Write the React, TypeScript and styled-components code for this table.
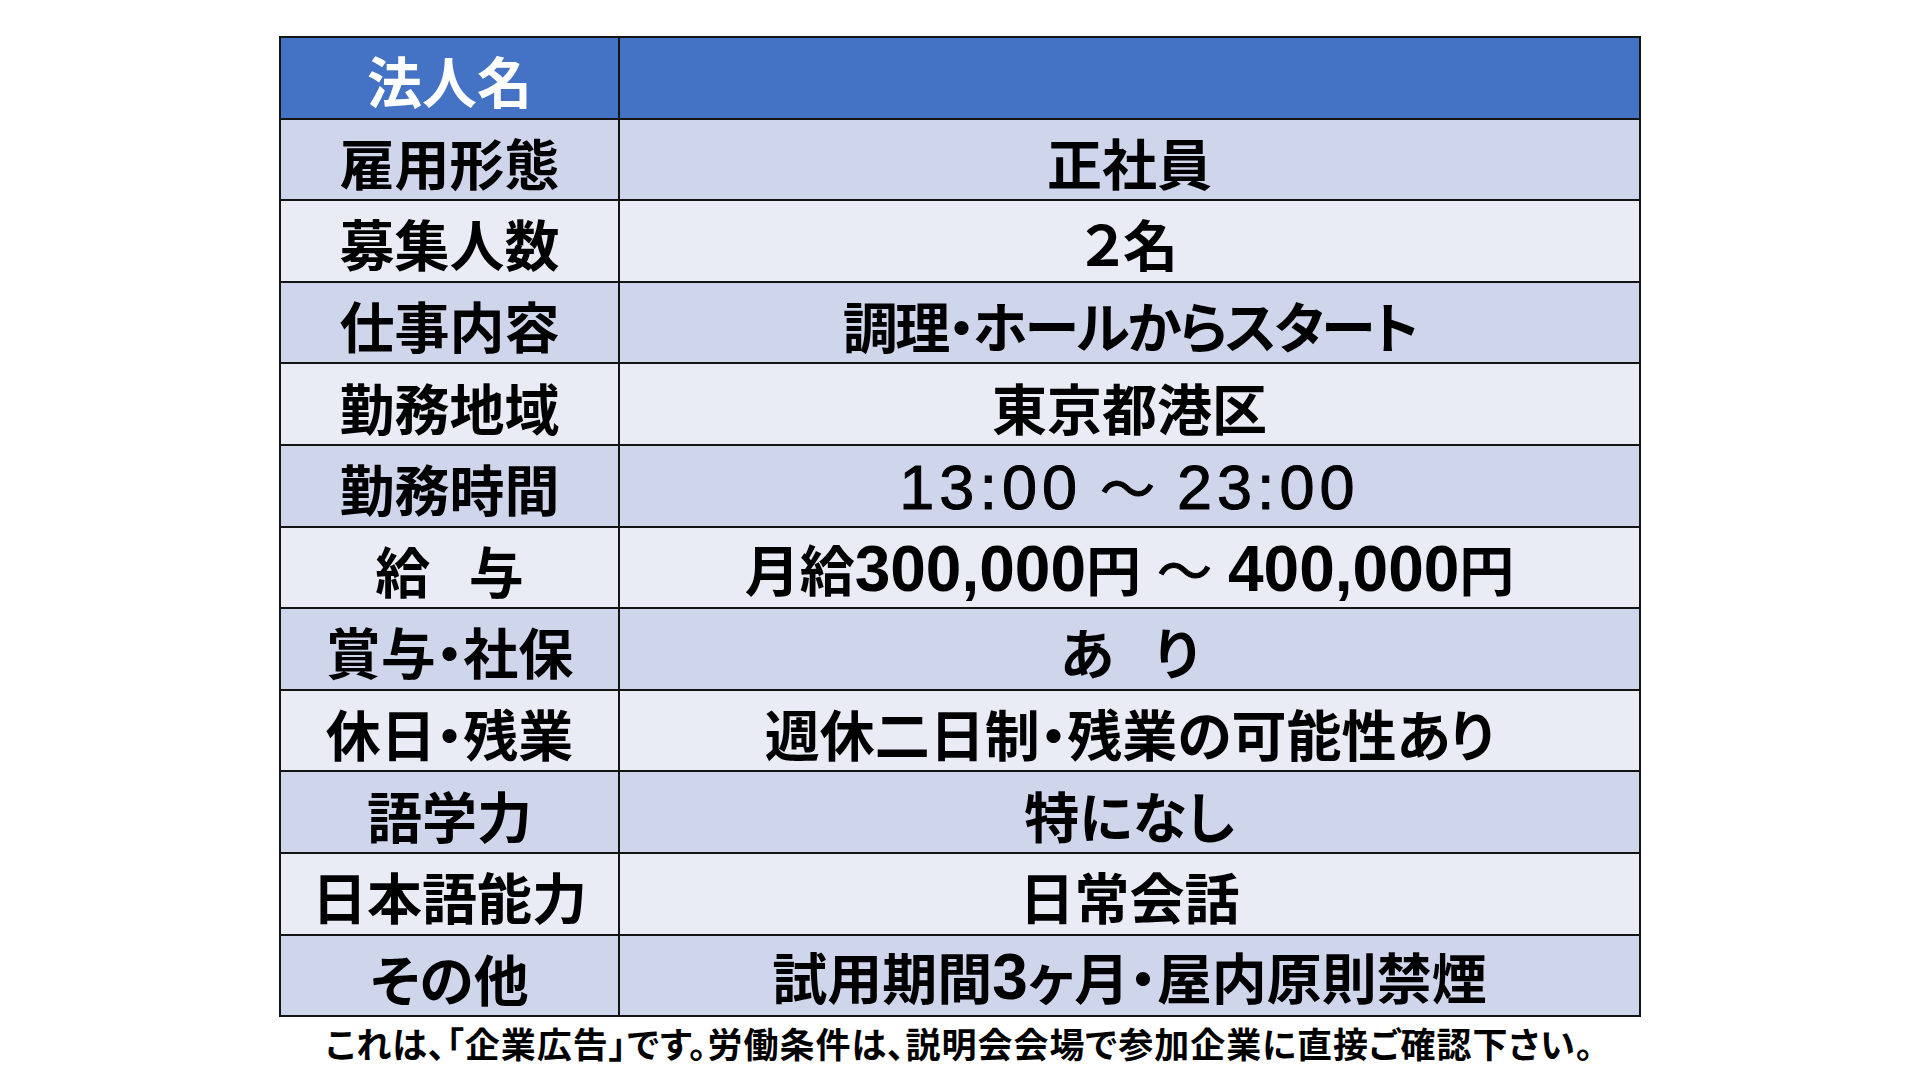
import React from "react";
import styled, { createGlobalStyle } from "styled-components";

const GlobalStyle = createGlobalStyle`
  html, body {
    margin: 0;
    padding: 0;
    background: #ffffff;
  }
  body {
    font-family: "Noto Sans CJK JP", "Noto Sans", sans-serif;
    color: #000;
  }
`;

const SPage = styled.div`
  width: 1920px;
  height: 1080px;
  box-sizing: border-box;
  padding-top: 36px;
  display: flex;
  flex-direction: column;
  align-items: center;
`;

const STable = styled.table`
  width: 1362px;
  border-collapse: collapse;
  table-layout: fixed;
  border: 2px solid #141414;
`;

type Tone = "head" | "dark" | "light";

const toneColor: Record<Tone, string> = {
  head: "#4472c4",
  dark: "#cfd5ea",
  light: "#e9ebf5",
};

const SRow = styled.tr<{ $tone: Tone }>`
  height: 81.6px;
  background: ${(p) => toneColor[p.$tone]};
  color: ${(p) => (p.$tone === "head" ? "#ffffff" : "#000000")};
`;

const SLabel = styled.th`
  width: 337px;
  padding: 4px 0 0;
  border: 2px solid #141414;
  font-size: 55px;
  font-weight: 700;
  line-height: 1;
  text-align: center;
  white-space: nowrap;
  font-feature-settings: "palt";
`;

const SValue = styled.td<{ $tight?: boolean }>`
  padding: 4px 0 0;
  border: 2px solid #141414;
  font-size: 55px;
  font-weight: 700;
  line-height: 1;
  text-align: center;
  white-space: nowrap;
  letter-spacing: ${(p) => (p.$tight ? "-2.5px" : "0")};
  font-feature-settings: "palt";
`;

const SNum = styled.span<{ $light?: boolean }>`
  font-family: "Liberation Sans", Arial, sans-serif;
  font-weight: ${(p) => (p.$light ? 400 : 700)};
  font-size: ${(p) => (p.$light ? "63px" : "64px")};
  letter-spacing: ${(p) => (p.$light ? "5px" : "0")};
  -webkit-text-stroke: ${(p) => (p.$light ? "1px #000" : "0")};
`;

const SWave = styled.span<{ $wide?: boolean }>`
  display: inline-block;
  margin: ${(p) => (p.$wide ? "0 22px 0 18px" : "0 16px")};
  font-family: "Noto Sans CJK JP", sans-serif;
  font-weight: 400;
  -webkit-text-stroke: 1px #000;
`;

const SFooter = styled.p`
  margin: 8px 0 0;
  font-size: 35px;
  font-weight: 700;
  line-height: 1;
  letter-spacing: 1px;
  font-feature-settings: "palt";
`;

type Item = { label: string; value: React.ReactNode; tight?: boolean };

const items: Item[] = [
  { label: "雇用形態", value: "正社員" },
  { label: "募集人数", value: "２名" },
  { label: "仕事内容", value: "調理・ホールからスタート", tight: true },
  { label: "勤務地域", value: "東京都港区" },
  {
    label: "勤務時間",
    value: (
      <>
        <SNum $light>13:00</SNum>
        <SWave $wide>～</SWave>
        <SNum $light>23:00</SNum>
      </>
    ),
  },
  {
    label: "給\u2002\u2009与",
    value: (
      <>
        月給<SNum>300,000</SNum>円<SWave>～</SWave>
        <SNum>400,000</SNum>円
      </>
    ),
  },
  { label: "賞与・社保", value: "あ\u2002\u2005り" },
  { label: "休日・残業", value: "週休二日制・残業の可能性あり" },
  { label: "語学力", value: "特になし" },
  { label: "日本語能力", value: "日常会話" },
  {
    label: "その他",
    value: (
      <>
        試用期間<SNum>3</SNum>ヶ月・屋内原則禁煙
      </>
    ),
  },
];

const App: React.FC = () => {
  return (
    <>
      <GlobalStyle />
      <SPage>
        <STable>
          <tbody>
            <SRow $tone="head">
              <SLabel>法人名</SLabel>
              <SValue />
            </SRow>
            {items.map((item, i) => (
              <SRow key={item.label} $tone={i % 2 === 0 ? "dark" : "light"}>
                <SLabel>{item.label}</SLabel>
                <SValue $tight={item.tight}>{item.value}</SValue>
              </SRow>
            ))}
          </tbody>
        </STable>
        <SFooter>
          これは、「企業広告」です。労働条件は、説明会会場で参加企業に直接ご確認下さい。
        </SFooter>
      </SPage>
    </>
  );
};

export default App;
